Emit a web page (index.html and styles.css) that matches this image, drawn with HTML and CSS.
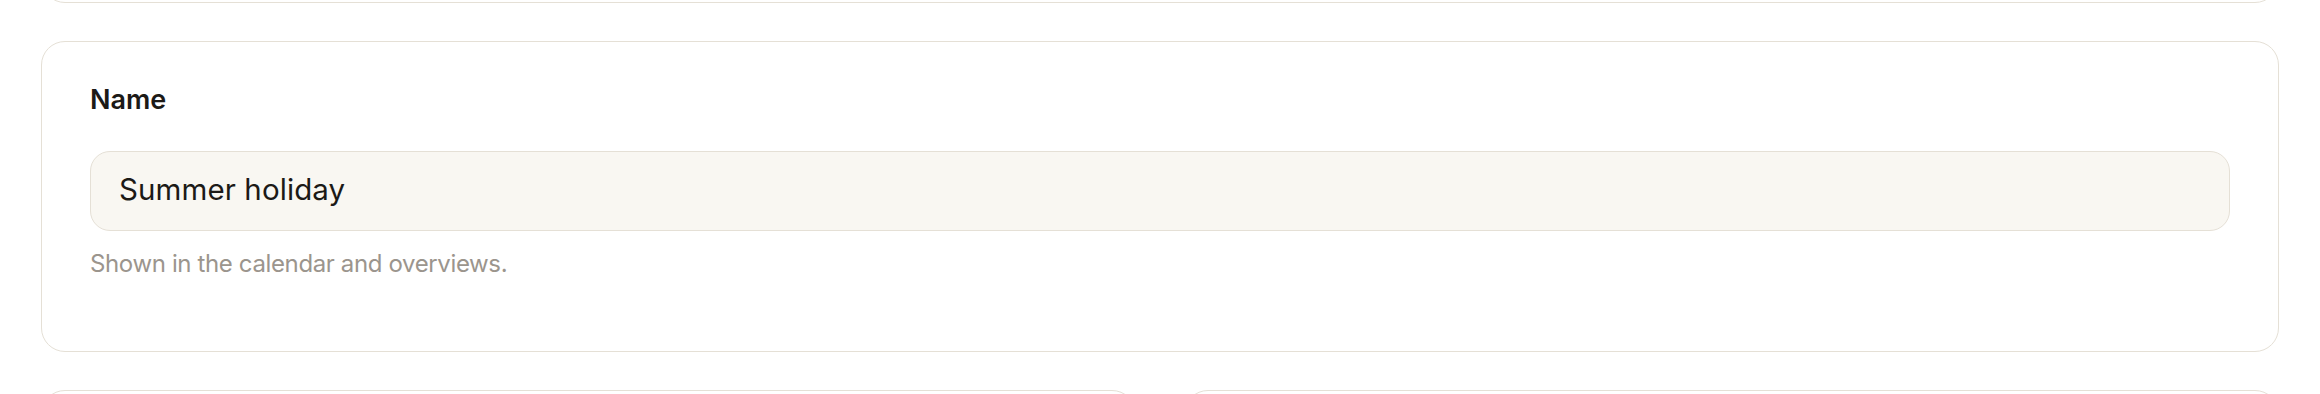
FILE: index.html
```html
<!DOCTYPE html>
<html>
<head lang="en">
	<meta charset="UTF-8">
	<title>Edit event</title>
	<link rel="stylesheet" href="styles.css">
</head>
<body>

<div class="page">
	<div class="stack">

		<section class="card card-prev"></section>

		<section class="card">
			<label class="field-label" for="event_name">Name</label>
			<input class="field-input" type="text" id="event_name" value="Summer holiday" />
			<p class="field-hint">Shown in the calendar and overviews.</p>
		</section>

		<div class="card-row">
			<section class="card card-next"></section>
			<section class="card card-next"></section>
		</div>

	</div>
</div>

</body>
</html>
```

FILE: styles.css
```css
* {
	margin: 0;
	padding: 0;
	box-sizing: border-box;
	font-family: "Inter", "Liberation Sans", sans-serif;
}
html, body {
	background: #ffffff;
	overflow: hidden;
}
.page {
	padding: 0 41px;
}
/* view is scrolled: the previous card only shows its bottom edge */
.stack {
	display: flex;
	flex-direction: column;
	gap: 38px;
	margin-top: -197px;
}
.card {
	background: #ffffff;
	border: 1.5px solid #e5e0d6;
	border-radius: 24px;
	padding: 39.5px 48px 71.5px;
}
.card-prev {
	height: 200px;
}
.card-row {
	display: grid;
	grid-template-columns: 1fr 1fr;
	gap: 48px;
}
.card-next {
	height: 200px;
}
.field-label {
	display: block;
	font-size: 27px;
	line-height: 36px;
	font-weight: 600;
	color: #1c1a17;
	margin-bottom: 33px;
}
.field-input {
	display: block;
	width: 100%;
	height: 80px;
	padding: 0 28px 3px;
	background: #f9f7f2;
	border: 1.5px solid #e5e0d6;
	border-radius: 20px;
	font-size: 29.5px;
	letter-spacing: 0.1px;
	color: #1c1a17;
	outline: none;
}
.field-hint {
	margin-top: 17px;
	font-size: 24px;
	line-height: 32px;
	letter-spacing: -0.37px;
	color: #9b958d;
}
```
